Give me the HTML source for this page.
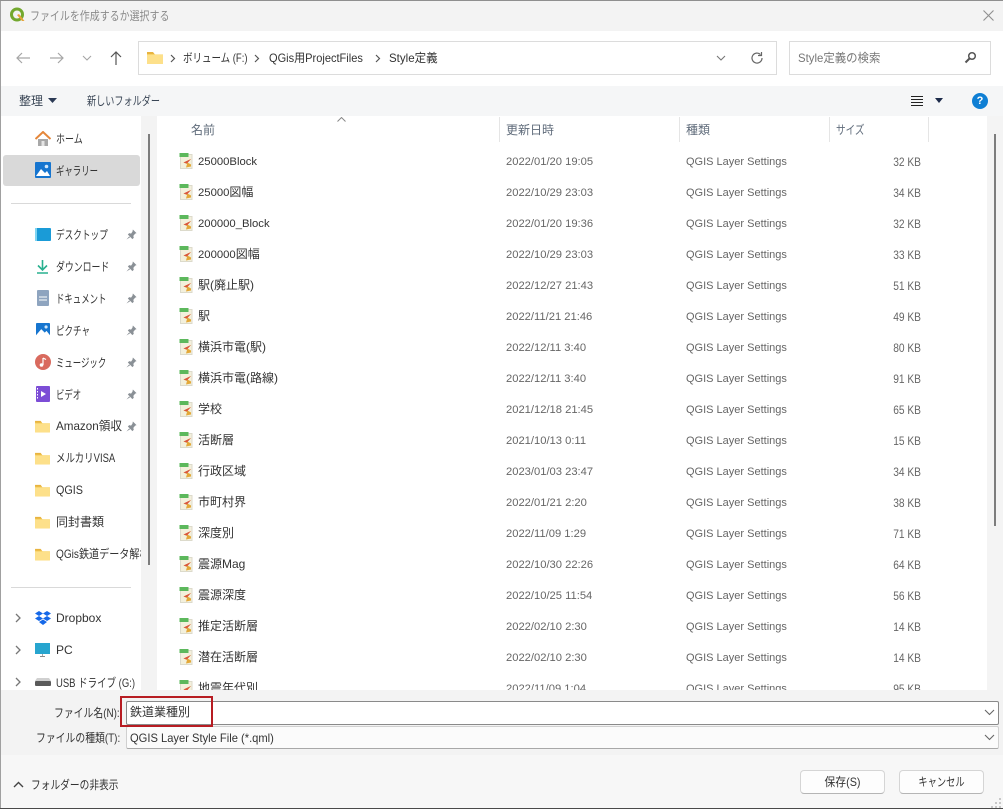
<!DOCTYPE html>
<html lang="ja"><head><meta charset="utf-8"><title>ファイルを作成するか選択する</title>
<style>
html,body{margin:0;padding:0;background:#fff}
#w{position:relative;width:1003px;height:809px;overflow:hidden;background:#fff;font-family:"Liberation Sans","Noto Sans CJK JP",sans-serif;font-size:12px;color:#333;filter:blur(.3px)}
#w div,#w span,#w svg{position:absolute}
.t{white-space:nowrap;line-height:16px;height:16px;transform-origin:left center}
i{font-style:normal;font-size:11.3px}
.d,.k,.r,.s,.h{margin-top:1px}
.g{color:#666}
.r{text-align:right;width:60px;left:861px;color:#666;transform:scaleX(.85);transform-origin:right center}
.n{left:198px}
.d{left:506px;color:#666;font-size:11.2px}
.k{left:686px;color:#666;font-size:11px}
.s{left:56px;color:#333}
.s.z{margin-top:0}
.h{color:#5f6b7a;top:121px}
.sep{width:1px;background:#e5e5e5;top:117px;height:25px}
</style></head><body>
<div id="w">
<svg width="0" height="0" style="left:0;top:0">
<defs>
<symbol id="fi" viewBox="0 0 14 16"><path d="M1.500 1.500h11.500v14H1.500z" fill="#f3f0dc" stroke="#dcdacb"/><rect x="0.500" y="0" width="9" height="4" fill="#5cb85c"/><path d="M12 6L4.500 9.500 8 11l-1 3.500 5-1V11.500L8.500 9.500z" fill="#e3a838"/><path d="M12 6L4.500 9.500 8 10.500z" fill="#d9553f"/></symbol>
<symbol id="fo" viewBox="0 0 16 14"><path d="M0 1.500h6l2 2h8V13H0z" fill="#f7d367"/><path d="M0 4h16v9.500H0z" fill="#fde08a"/><path d="M0 1h6l1.500 2H0z" fill="#e8b33f"/></symbol>
<symbol id="pin" viewBox="0 0 12 12"><path d="M7.500.5l4 4-1.500.5-2 2.500.5 2-1.500 1.500L2 6 3.500 4.500l2 .5L7 3zM3.500 8L.5 11.500 4.500 9z" fill="#8a9096"/></symbol>
<symbol id="chev" viewBox="0 0 10 10"><path d="M3 1l4 4-4 4" fill="none" stroke="#777" stroke-width="1.300"/></symbol>
</defs></svg>

<!-- title bar -->
<div style="left:0;top:0;width:1003px;height:31px;background:#f3f3f3"></div>
<svg style="left:9px;top:7px" width="16" height="16" viewBox="0 0 16 16"><circle cx="8" cy="7.500" r="5.500" fill="none" stroke="#73a82e" stroke-width="3"/><path d="M8 8l5 6h2.500L10 7z" fill="#e8a33a"/></svg>
<span class="t" style="left:30px;top:8px;color:#8a8a8a;transform:scaleX(.83)">ファイルを作成するか選択する</span>
<svg style="left:982px;top:9px" width="13" height="13" viewBox="0 0 13 13"><path d="M1.500 1.500l10 10M11.500 1.500l-10 10" stroke="#8f8f8f" stroke-width="1.100"/></svg>

<!-- nav -->
<svg style="left:15px;top:50px" width="16" height="16" viewBox="0 0 16 16"><path d="M15 8H2M7 3L2 8l5 5" fill="none" stroke="#a6a6a6" stroke-width="1.200"/></svg>
<svg style="left:49px;top:50px" width="16" height="16" viewBox="0 0 16 16"><path d="M1 8h13M9 3l5 5-5 5" fill="none" stroke="#a6a6a6" stroke-width="1.200"/></svg>
<svg style="left:82px;top:54px" width="10" height="8" viewBox="0 0 10 8"><path d="M1 2l4 4 4-4" fill="none" stroke="#a6a6a6" stroke-width="1.100"/></svg>
<svg style="left:108px;top:50px" width="16" height="16" viewBox="0 0 16 16"><path d="M8 15V2M3 7l5-5 5 5" fill="none" stroke="#555" stroke-width="1.200"/></svg>
<div style="left:138px;top:41px;width:637px;height:32px;border:1px solid #dcdcdc;background:#fff"></div>
<svg style="left:147px;top:51px" width="16" height="13"><use href="#fo" width="16" height="14"/></svg>
<svg style="left:169px;top:54px" width="8" height="9" viewBox="0 0 8 9"><path d="M2 1l3.500 3.500L2 8" fill="none" stroke="#555" stroke-width="1.200"/></svg>
<span class="t" style="left:183px;top:50px;transform:scaleX(.79)">ボリューム (F:)</span>
<svg style="left:253px;top:54px" width="8" height="9" viewBox="0 0 8 9"><path d="M2 1l3.500 3.500L2 8" fill="none" stroke="#555" stroke-width="1.200"/></svg>
<span class="t" style="left:269px;top:50px;transform:scaleX(.92)">QGis用ProjectFiles</span>
<svg style="left:374px;top:54px" width="8" height="9" viewBox="0 0 8 9"><path d="M2 1l3.500 3.500L2 8" fill="none" stroke="#555" stroke-width="1.200"/></svg>
<span class="t" style="left:389px;top:50px;transform:scaleX(.96)">Style定義</span>
<svg style="left:715px;top:54px" width="12" height="9" viewBox="0 0 12 9"><path d="M2 2l4 4 4-4" fill="none" stroke="#777" stroke-width="1.100"/></svg>
<svg style="left:750px;top:51px" width="14" height="14" viewBox="0 0 14 14"><path d="M12 7a5 5 0 1 1-1.500-3.500" fill="none" stroke="#666" stroke-width="1.200"/><path d="M11.500 1v3.500H8" fill="none" stroke="#666" stroke-width="1.200"/></svg>
<div style="left:789px;top:41px;width:200px;height:32px;border:1px solid #dcdcdc;background:#fff"></div>
<span class="t" style="left:798px;top:50px;color:#777;transform:scaleX(.95)">Style定義の検索</span>
<svg style="left:964px;top:51px" width="13" height="13" viewBox="0 0 13 13"><circle cx="8" cy="5" r="3.300" fill="none" stroke="#555" stroke-width="1.500"/><path d="M5.500 7.500L1.500 11.500" stroke="#555" stroke-width="2"/></svg>

<!-- toolbar -->
<div style="left:0;top:86px;width:1003px;height:30px;background:#f5f6f7"></div>
<span class="t" style="left:19px;top:93px;color:#3a4656">整理</span>
<svg style="left:48px;top:98px" width="9" height="5" viewBox="0 0 9 5"><path d="M0 0h9L4.500 5z" fill="#2b3a55"/></svg>
<span class="t" style="left:87px;top:93px;color:#3a4656;transform:scaleX(.76)">新しいフォルダー</span>
<svg style="left:911px;top:96px" width="12" height="10" viewBox="0 0 12 10"><path d="M0 .5h12M0 3.500h12M0 6.500h12M0 9.500h12" stroke="#222" stroke-width="1"/></svg>
<svg style="left:935px;top:98px" width="8" height="5" viewBox="0 0 8 5"><path d="M0 0h8L4 5z" fill="#1d2b4a"/></svg>
<svg style="left:972px;top:93px" width="16" height="16" viewBox="0 0 16 16"><circle cx="8" cy="8" r="8" fill="#0f7fd4"/></svg>
<span class="t" style="left:972px;top:93px;width:16px;text-align:center;color:#fff;font-weight:bold;font-size:11px">?</span>

<!-- sidebar -->
<div style="left:141px;top:116px;width:16px;height:575px;background:#f3f3f3"></div>
<div style="left:148px;top:134px;width:2px;height:431px;background:#7d7d7d"></div>
<div style="left:3px;top:155px;width:137px;height:31px;background:#d9d9d9;border-radius:3px"></div>
<svg style="left:35px;top:131px" width="16" height="16" viewBox="0 0 16 16"><path d="M3 8h10v7H3z" fill="#a8a8a8"/><path d="M6.500 10h3v5h-3z" fill="#e5e5e5"/><path d="M.5 8L8 1l7.500 7" fill="none" stroke="#e5873a" stroke-width="2"/></svg>
<span class="t s" style="top:130px;transform:scaleX(.75)">ホーム</span>
<svg style="left:35px;top:162px" width="16" height="16" viewBox="0 0 16 16"><rect width="16" height="16" rx="1" fill="#1675cf"/><path d="M1 14l5-7 4 4 2-2 3 5z" fill="#fff"/><circle cx="11.500" cy="4.500" r="1.800" fill="#cfe6fa"/></svg>
<span class="t s" style="top:162px;transform:scaleX(.7)">ギャラリー</span>
<div style="left:11px;top:203px;width:120px;height:1px;background:#d9d9d9"></div>

<svg style="left:35px;top:228px" width="16" height="13" viewBox="0 0 16 13"><rect width="16" height="13" rx="1" fill="#1a9bd7"/><rect width="2" height="13" fill="#7fd4f2"/></svg>
<span class="t s" style="top:226px;transform:scaleX(.72)">デスクトップ</span><svg style="left:126px;top:229px" width="11" height="11"><use href="#pin" width="11" height="11"/></svg>
<svg style="left:35px;top:259px" width="15" height="15" viewBox="0 0 15 15"><path d="M7.500 1v9M3 6.500l4.500 4.500L12 6.500" fill="none" stroke="#29b08f" stroke-width="1.600"/><path d="M2 14h11" stroke="#29b08f" stroke-width="1.500"/></svg>
<span class="t s" style="top:258px;transform:scaleX(.74)">ダウンロード</span><svg style="left:126px;top:261px" width="11" height="11"><use href="#pin" width="11" height="11"/></svg>
<svg style="left:37px;top:290px" width="12" height="16" viewBox="0 0 12 16"><rect width="12" height="16" rx="1" fill="#8ea4bf"/><path d="M2 7h8M2 10h8" stroke="#fff" stroke-width="1"/></svg>
<span class="t s" style="top:290px;transform:scaleX(.7)">ドキュメント</span><svg style="left:126px;top:293px" width="11" height="11"><use href="#pin" width="11" height="11"/></svg>
<svg style="left:36px;top:323px" width="14" height="14" viewBox="0 0 16 16"><rect width="16" height="16" rx="1" fill="#1675cf"/><path d="M0 14l6-7 4 4 2-2 4 5v2H0z" fill="#fff"/><circle cx="11.500" cy="4.500" r="1.800" fill="#cfe6fa"/></svg>
<span class="t s" style="top:322px;transform:scaleX(.71)">ピクチャ</span><svg style="left:126px;top:325px" width="11" height="11"><use href="#pin" width="11" height="11"/></svg>
<svg style="left:35px;top:354px" width="16" height="16" viewBox="0 0 16 16"><circle cx="8" cy="8" r="8" fill="#d96a5e"/><path d="M8 4v7" stroke="#fff" stroke-width="1.200"/><circle cx="6.500" cy="11" r="1.800" fill="#fff"/><path d="M8 4l3 1.500" stroke="#fff" stroke-width="1.200"/></svg>
<span class="t s" style="top:354px;transform:scaleX(.7)">ミュージック</span><svg style="left:126px;top:357px" width="11" height="11"><use href="#pin" width="11" height="11"/></svg>
<svg style="left:36px;top:386px" width="14" height="16" viewBox="0 0 14 16"><rect width="14" height="16" rx="1" fill="#7c4dd6"/><path d="M5 5l5 3-5 3z" fill="#fff"/><path d="M1.500 2v12" stroke="#fff" stroke-width="1" stroke-dasharray="1.500 1.500"/></svg>
<span class="t s" style="top:386px;transform:scaleX(.7)">ビデオ</span><svg style="left:126px;top:389px" width="11" height="11"><use href="#pin" width="11" height="11"/></svg>
<svg style="left:35px;top:420px" width="15" height="13"><use href="#fo" width="15" height="13"/></svg>
<span class="t s z" style="top:418px;transform:scaleX(.97)">Amazon領収</span><svg style="left:126px;top:421px" width="11" height="11"><use href="#pin" width="11" height="11"/></svg>
<svg style="left:35px;top:452px" width="15" height="13"><use href="#fo" width="15" height="13"/></svg>
<span class="t s z" style="top:450px;transform:scaleX(.79)">メルカリVISA</span>
<svg style="left:35px;top:484px" width="15" height="13"><use href="#fo" width="15" height="13"/></svg>
<span class="t s z" style="top:482px;transform:scaleX(.9)">QGIS</span>
<svg style="left:35px;top:516px" width="15" height="13"><use href="#fo" width="15" height="13"/></svg>
<span class="t s z" style="top:514px">同封書類</span>
<svg style="left:35px;top:548px" width="15" height="13"><use href="#fo" width="15" height="13"/></svg>
<div style="left:56px;top:546px;width:85px;height:16px;overflow:hidden"><span class="t" style="left:0;top:0;transform:scaleX(.84)">QGis鉄道データ解析</span></div>
<div style="left:11px;top:587px;width:120px;height:1px;background:#d9d9d9"></div>
<svg style="left:13px;top:613px" width="10" height="10"><use href="#chev" width="10" height="10"/></svg>
<svg style="left:35px;top:611px" width="16" height="15" viewBox="0 0 16 15"><path d="M4 0l4 2.500L4 5 0 2.500zM12 0l4 2.500L12 5 8 2.500zM4 5l4 2.500L4 10 0 7.500zM12 5l4 2.500L12 10 8 7.500zM8 8.500l4 2.500-4 3-4-3z" fill="#1568e8"/></svg>
<span class="t s z" style="top:610px">Dropbox</span>
<svg style="left:13px;top:645px" width="10" height="10"><use href="#chev" width="10" height="10"/></svg>
<svg style="left:35px;top:643px" width="16" height="15" viewBox="0 0 16 15"><rect width="15" height="11" fill="#27a5cf"/><path d="M5 13h5v1H5z" fill="#8a8a8a"/><path d="M7 11h1v2H7z" fill="#aaa"/></svg>
<span class="t s z" style="top:642px">PC</span>
<svg style="left:13px;top:677px" width="10" height="10"><use href="#chev" width="10" height="10"/></svg>
<svg style="left:35px;top:678px" width="16" height="9" viewBox="0 0 16 9"><path d="M2 0h12l2 3H0z" fill="#d0d0d0"/><rect y="3" width="16" height="5" rx="1" fill="#5a5a5a"/></svg>
<span class="t s" style="top:674px;transform:scaleX(.79)">USB ドライブ (G:)</span>

<!-- list header -->
<svg style="left:337px;top:117px" width="9" height="5" viewBox="0 0 9 5"><path d="M.5 4.500L4.500 .5l4 4" fill="none" stroke="#888"/></svg>
<span class="t h" style="left:191px">名前</span>
<span class="t h" style="left:506px">更新日時</span>
<span class="t h" style="left:686px">種類</span>
<span class="t h" style="left:836px;transform:scaleX(.8)">サイズ</span>
<div class="sep" style="left:499px"></div><div class="sep" style="left:679px"></div><div class="sep" style="left:829px"></div><div class="sep" style="left:928px"></div>

<!-- rows -->
<svg style="left:179px;top:153px" width="14" height="16"><use href="#fi" width="14" height="16"/></svg><span class="t n" style="top:153px"><i>25000Block</i></span><span class="t d" style="top:153px">2022/01/20 19:05</span><span class="t k" style="top:153px">QGIS Layer Settings</span><span class="t r" style="top:153px">32 KB</span>
<svg style="left:179px;top:184px" width="14" height="16"><use href="#fi" width="14" height="16"/></svg><span class="t n" style="top:184px"><i>25000</i>図幅</span><span class="t d" style="top:184px">2022/10/29 23:03</span><span class="t k" style="top:184px">QGIS Layer Settings</span><span class="t r" style="top:184px">34 KB</span>
<svg style="left:179px;top:215px" width="14" height="16"><use href="#fi" width="14" height="16"/></svg><span class="t n" style="top:215px"><i>200000_Block</i></span><span class="t d" style="top:215px">2022/01/20 19:36</span><span class="t k" style="top:215px">QGIS Layer Settings</span><span class="t r" style="top:215px">32 KB</span>
<svg style="left:179px;top:246px" width="14" height="16"><use href="#fi" width="14" height="16"/></svg><span class="t n" style="top:246px"><i>200000</i>図幅</span><span class="t d" style="top:246px">2022/10/29 23:03</span><span class="t k" style="top:246px">QGIS Layer Settings</span><span class="t r" style="top:246px">33 KB</span>
<svg style="left:179px;top:277px" width="14" height="16"><use href="#fi" width="14" height="16"/></svg><span class="t n" style="top:277px">駅(廃止駅)</span><span class="t d" style="top:277px">2022/12/27 21:43</span><span class="t k" style="top:277px">QGIS Layer Settings</span><span class="t r" style="top:277px">51 KB</span>
<svg style="left:179px;top:308px" width="14" height="16"><use href="#fi" width="14" height="16"/></svg><span class="t n" style="top:308px">駅</span><span class="t d" style="top:308px">2022/11/21 21:46</span><span class="t k" style="top:308px">QGIS Layer Settings</span><span class="t r" style="top:308px">49 KB</span>
<svg style="left:179px;top:339px" width="14" height="16"><use href="#fi" width="14" height="16"/></svg><span class="t n" style="top:339px">横浜市電(駅)</span><span class="t d" style="top:339px">2022/12/11 3:40</span><span class="t k" style="top:339px">QGIS Layer Settings</span><span class="t r" style="top:339px">80 KB</span>
<svg style="left:179px;top:370px" width="14" height="16"><use href="#fi" width="14" height="16"/></svg><span class="t n" style="top:370px">横浜市電(路線)</span><span class="t d" style="top:370px">2022/12/11 3:40</span><span class="t k" style="top:370px">QGIS Layer Settings</span><span class="t r" style="top:370px">91 KB</span>
<svg style="left:179px;top:401px" width="14" height="16"><use href="#fi" width="14" height="16"/></svg><span class="t n" style="top:401px">学校</span><span class="t d" style="top:401px">2021/12/18 21:45</span><span class="t k" style="top:401px">QGIS Layer Settings</span><span class="t r" style="top:401px">65 KB</span>
<svg style="left:179px;top:432px" width="14" height="16"><use href="#fi" width="14" height="16"/></svg><span class="t n" style="top:432px">活断層</span><span class="t d" style="top:432px">2021/10/13 0:11</span><span class="t k" style="top:432px">QGIS Layer Settings</span><span class="t r" style="top:432px">15 KB</span>
<svg style="left:179px;top:463px" width="14" height="16"><use href="#fi" width="14" height="16"/></svg><span class="t n" style="top:463px">行政区域</span><span class="t d" style="top:463px">2023/01/03 23:47</span><span class="t k" style="top:463px">QGIS Layer Settings</span><span class="t r" style="top:463px">34 KB</span>
<svg style="left:179px;top:494px" width="14" height="16"><use href="#fi" width="14" height="16"/></svg><span class="t n" style="top:494px">市町村界</span><span class="t d" style="top:494px">2022/01/21 2:20</span><span class="t k" style="top:494px">QGIS Layer Settings</span><span class="t r" style="top:494px">38 KB</span>
<svg style="left:179px;top:525px" width="14" height="16"><use href="#fi" width="14" height="16"/></svg><span class="t n" style="top:525px">深度別</span><span class="t d" style="top:525px">2022/11/09 1:29</span><span class="t k" style="top:525px">QGIS Layer Settings</span><span class="t r" style="top:525px">71 KB</span>
<svg style="left:179px;top:556px" width="14" height="16"><use href="#fi" width="14" height="16"/></svg><span class="t n" style="top:556px">震源Mag</span><span class="t d" style="top:556px">2022/10/30 22:26</span><span class="t k" style="top:556px">QGIS Layer Settings</span><span class="t r" style="top:556px">64 KB</span>
<svg style="left:179px;top:587px" width="14" height="16"><use href="#fi" width="14" height="16"/></svg><span class="t n" style="top:587px">震源深度</span><span class="t d" style="top:587px">2022/10/25 11:54</span><span class="t k" style="top:587px">QGIS Layer Settings</span><span class="t r" style="top:587px">56 KB</span>
<svg style="left:179px;top:618px" width="14" height="16"><use href="#fi" width="14" height="16"/></svg><span class="t n" style="top:618px">推定活断層</span><span class="t d" style="top:618px">2022/02/10 2:30</span><span class="t k" style="top:618px">QGIS Layer Settings</span><span class="t r" style="top:618px">14 KB</span>
<svg style="left:179px;top:649px" width="14" height="16"><use href="#fi" width="14" height="16"/></svg><span class="t n" style="top:649px">潜在活断層</span><span class="t d" style="top:649px">2022/02/10 2:30</span><span class="t k" style="top:649px">QGIS Layer Settings</span><span class="t r" style="top:649px">14 KB</span>
<svg style="left:179px;top:680px" width="14" height="16"><use href="#fi" width="14" height="16"/></svg><span class="t n" style="top:680px">地震年代別</span><span class="t d" style="top:680px">2022/11/09 1:04</span><span class="t k" style="top:680px">QGIS Layer Settings</span><span class="t r" style="top:680px">95 KB</span>

<!-- right scrollbar -->
<div style="left:987px;top:116px;width:16px;height:575px;background:#f4f4f4"></div>
<div style="left:994px;top:134px;width:2px;height:392px;background:#7d7d7d"></div>

<!-- bottom panel -->
<div style="left:0;top:690px;width:1003px;height:65px;background:#f3f3f3"></div>
<div style="left:0;top:755px;width:1003px;height:54px;background:#f7f7f7"></div>
<span class="t" style="left:54px;top:705px;color:#333;transform:scaleX(.82)">ファイル名(N):</span>
<span class="t" style="left:36px;top:730px;color:#333;transform:scaleX(.82)">ファイルの種類(T):</span>
<div style="left:126px;top:701px;width:871px;height:22px;background:#fff;border:1px solid #8a8a8a;border-radius:2px"></div>
<div style="left:126px;top:726px;width:871px;height:21px;background:#fbfbfb;border:1px solid #d0d0d0;border-bottom-color:#a8a8a8;border-radius:2px"></div>
<span class="t" style="left:130px;top:704px;color:#333">鉄道業種別</span>
<span class="t" style="left:130px;top:730px;color:#333;transform:scaleX(.93)">QGIS Layer Style File (*.qml)</span>
<svg style="left:984px;top:709px" width="11" height="7" viewBox="0 0 11 7"><path d="M1 1l4.500 4.500L10 1" fill="none" stroke="#666" stroke-width="1.100"/></svg>
<svg style="left:984px;top:734px" width="11" height="7" viewBox="0 0 11 7"><path d="M1 1l4.500 4.500L10 1" fill="none" stroke="#666" stroke-width="1.100"/></svg>
<div style="left:120px;top:696px;width:89px;height:27px;border:2px solid #b71c22"></div>
<svg style="left:13px;top:781px" width="11" height="7" viewBox="0 0 11 7"><path d="M1 6l4.500-4.500L10 6" fill="none" stroke="#444" stroke-width="1.400"/></svg>
<span class="t" style="left:31px;top:777px;color:#333;transform:scaleX(.81)">フォルダーの非表示</span>
<div style="left:800px;top:770px;width:83px;height:22px;background:#fdfdfd;border:1px solid #d5d5d5;border-bottom-color:#b5b5b5;border-radius:4px"></div>
<span class="t" style="left:800px;top:774px;width:85px;text-align:center;color:#333;transform:scaleX(.9);transform-origin:center">保存(S)</span>
<div style="left:899px;top:770px;width:83px;height:22px;background:#fdfdfd;border:1px solid #d5d5d5;border-bottom-color:#b5b5b5;border-radius:4px"></div>
<span class="t" style="left:899px;top:774px;width:85px;text-align:center;color:#333;transform:scaleX(.77);transform-origin:center">キャンセル</span>
<svg style="left:990px;top:796px" width="12" height="12" viewBox="0 0 12 12"><path d="M9 2h2v2H9zM5 6h2v2H5zM9 6h2v2H9zM1 10h2v2H1zM5 10h2v2H5zM9 10h2v2H9z" fill="#c8c8c8"/></svg>

<!-- window edges -->
<div style="left:0;top:0;width:1px;height:809px;background:#a0a0a0"></div>
<div style="left:0;top:0;width:1003px;height:1px;background:#8f8f8f"></div>
<div style="left:0;top:808px;width:1003px;height:1px;background:#4a4a4a"></div>
</div>
</body></html>
